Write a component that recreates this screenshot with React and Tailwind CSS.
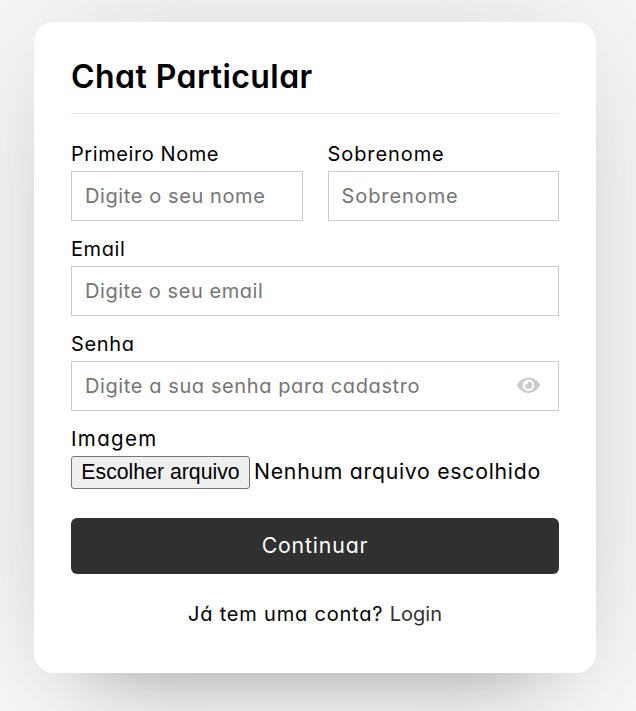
import { FaEye } from 'react-icons/fa';

const inputClass =
  'block h-[50px] w-full rounded-none border border-[#ccc] bg-white px-[13px] text-[20px] font-normal text-black outline-none placeholder:text-[#757575]';

function Field({ label, labelClass, children }) {
  return (
    <div className="flex min-w-0 flex-1 flex-col">
      <label className="flex h-[34px] items-center whitespace-nowrap text-[20px] font-normal">
        <span className={labelClass}>{label}</span>
      </label>
      {children}
    </div>
  );
}

export default function App() {
  return (
    <div className="flex h-[711px] w-[636px] flex-col overflow-hidden bg-[#f7f7f7] pl-[34px] pt-[22px] font-['Inter','Liberation_Sans',sans-serif] text-black [font-feature-settings:'cv11'_1]">
      <section className="h-[651px] w-[562px] shrink-0 rounded-[20px] bg-white px-[37px] pt-[31px] shadow-[0_0_160px_0_rgba(0,0,0,0.1),0_40px_80px_-60px_rgba(0,0,0,0.5)]">
        <header className="h-[61px] whitespace-nowrap border-b border-[#e6e6e6] text-[32px] font-semibold leading-[48px]">
          <span className="tracking-[0.44px]">Chat Particular</span>
        </header>
        <form className="flex flex-col pt-[23px]" onSubmit={(e) => e.preventDefault()}>
          <div className="flex gap-[25px]">
            <Field label="Primeiro Nome" labelClass="tracking-[0.58px]">
              <input className={`${inputClass} tracking-[0.6px]`} placeholder="Digite o seu nome" />
            </Field>
            <Field label="Sobrenome" labelClass="tracking-[0.92px]">
              <input className={`${inputClass} tracking-[0.92px]`} placeholder="Sobrenome" />
            </Field>
          </div>
          <div className="mt-[11px] flex">
            <Field label="Email" labelClass="tracking-[0.6px]">
              <input className={`${inputClass} tracking-[0.55px]`} placeholder="Digite o seu email" />
            </Field>
          </div>
          <div className="mt-[11px] flex">
            <Field label="Senha" labelClass="tracking-[0.65px]">
              <div className="relative">
                <input type="password" className={`${inputClass} tracking-[0.6px]`} placeholder="Digite a sua senha para cadastro" />
                <FaEye className="absolute right-[18.75px] top-[14px] h-[20.5px] w-[23px] text-[#ccc]" />
              </div>
            </Field>
          </div>
          <div className="mt-[11px] flex">
            <Field label="Imagem" labelClass="text-[20.5px] tracking-[1.35px]">
              <div className="flex h-[33px] items-center whitespace-nowrap">
                <button type="button" className="h-[33px] w-[179px] shrink-0 rounded-[3px] border border-[#767676] bg-[#efefef] pb-[2px] font-['Liberation_Sans',Arial,sans-serif] text-[21.25px] leading-[30px]">
                  Escolher arquivo
                </button>
                <span className="-mt-[2px] ml-[4px] text-[21.25px] font-normal leading-[31px] tracking-[0.73px]">Nenhum arquivo escolhido</span>
              </div>
            </Field>
          </div>
          <button type="submit" className="mt-[29px] h-14 w-full rounded-[6px] bg-[#303030] text-[21.25px] text-white">
            <span className="tracking-[0.85px]">Continuar</span>
          </button>
        </form>
        <p className="mt-[25px] whitespace-nowrap text-center text-[20px] font-normal leading-[30px]">
          <span className="tracking-[0.8px]">Já tem uma conta? </span>
          <a href="#" className="tracking-[0px] text-[#333]">Login</a>
        </p>
      </section>
    </div>
  );
}
